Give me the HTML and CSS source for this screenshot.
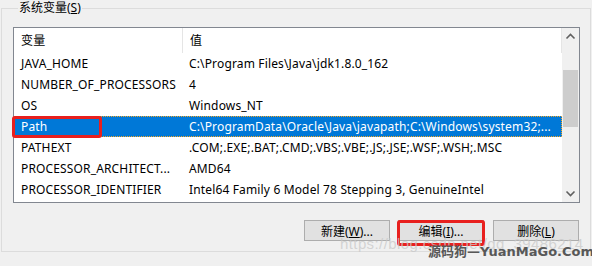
FILE: index.html
```html
<!DOCTYPE html>
<html lang="zh-CN">
<head>
    <meta charset="UTF-8">
    <title>系统变量</title>
    <link rel="stylesheet" href="styles.css">
</head>
<body>
<fieldset class="grupo">
    <legend>系统变量(<u>S</u>)</legend>

    <div class="lista">
        <div class="tabla">
            <div class="cabecera">
                <div class="col-nombre">变量</div>
                <div class="col-valor">值</div>
            </div>
            <div class="fila">
                <div class="col-nombre">JAVA_HOME</div>
                <div class="col-valor">C:\Program Files\Java\jdk1.8.0_162</div>
            </div>
            <div class="fila">
                <div class="col-nombre">NUMBER_OF_PROCESSORS</div>
                <div class="col-valor">4</div>
            </div>
            <div class="fila">
                <div class="col-nombre">OS</div>
                <div class="col-valor">Windows_NT</div>
            </div>
            <div class="fila seleccionada">
                <div class="col-nombre">Path</div>
                <div class="col-valor">C:\ProgramData\Oracle\Java\javapath;C:\Windows\system32;...</div>
                <span class="marca marca-path"></span>
            </div>
            <div class="fila">
                <div class="col-nombre">PATHEXT</div>
                <div class="col-valor">.COM;.EXE;.BAT;.CMD;.VBS;.VBE;.JS;.JSE;.WSF;.WSH;.MSC</div>
            </div>
            <div class="fila">
                <div class="col-nombre">PROCESSOR_ARCHITECT...</div>
                <div class="col-valor">AMD64</div>
            </div>
            <div class="fila">
                <div class="col-nombre">PROCESSOR_IDENTIFIER</div>
                <div class="col-valor">Intel64 Family 6 Model 78 Stepping 3, GenuineIntel</div>
            </div>
        </div>

        <!-- barra de desplazamiento -->
        <div class="scroll">
            <svg class="flecha" width="17" height="17" viewBox="0 0 17 17">
                <path d="M4.5 10.5 L8.5 6.5 L12.5 10.5" fill="none" stroke="#606060" stroke-width="1.6"/>
            </svg>
            <div class="pista">
                <div class="pulgar"></div>
            </div>
            <svg class="flecha" width="17" height="17" viewBox="0 0 17 17">
                <path d="M4.5 6.5 L8.5 10.5 L12.5 6.5" fill="none" stroke="#606060" stroke-width="1.6"/>
            </svg>
        </div>
    </div>

    <div class="botones">
        <button type="button">新建(<u>W</u>)...</button>
        <button type="button" class="marcado">编辑(<u>I</u>)...<span class="marca marca-boton"></span></button>
        <button type="button">删除(<u>L</u>)</button>
    </div>
</fieldset>

<!-- marcas de agua de la captura -->
<div class="agua-url">https://blog.csdn.net/qq_39486214</div>
<div class="agua-sitio">源码狗—YuanMaGo.Com</div>
</body>
</html>
```

FILE: styles.css
```css
body {
    margin: 0;
    padding: 0 1px;
    background-color: #f0f0f0;
    font-family: "Noto Sans", "Noto Sans CJK SC", sans-serif;
    font-size: 12px;
    color: #000;
}

.grupo {
    margin: 0;
    padding: 0 10px 0 11px;
    height: 250px;
    border: 1px solid #dcdcdc;
    min-width: 0;
}

.grupo legend {
    margin-left: 5px;
    padding: 0 1px;
    line-height: 16px;
    font-size: 12px;
}

.lista {
    display: flex;
    margin-top: 11px;
    height: 174px;
    border: 1px solid #828790;
    background-color: white;
}

.tabla {
    flex: 1;
    min-width: 0;
    letter-spacing: 0.15px;
}

.cabecera {
    display: flex;
    height: 25px;
    align-items: center;
}

.cabecera .col-nombre {
    border-right: 1px solid #e5e5e5;
    height: 25px;
    line-height: 25px;
}

.cabecera .col-valor {
    flex: 1;
    border-right: 1px solid #e5e5e5;
    height: 25px;
    line-height: 25px;
}

.fila {
    position: relative;
    display: flex;
    height: 21px;
    line-height: 21px;
    white-space: nowrap;
}

.col-nombre {
    width: 161px;
    padding-left: 7px;
}

.col-valor {
    padding-left: 7px;
    overflow: hidden;
}

.fila.seleccionada {
    background-color: #0078d7;
    color: white;
    outline: 1px dotted #f5a623;
    outline-offset: -1px;
}

.marca {
    position: absolute;
    border: 3px solid #e8201e;
    border-radius: 3px;
    pointer-events: none;
}

.marca-path {
    left: -2px;
    top: 0;
    width: 84px;
    height: 16px;
}

.scroll {
    width: 17px;
    display: flex;
    flex-direction: column;
    background-color: #f0f0f0;
}

.flecha {
    display: block;
    flex: none;
}

.pista {
    flex: 1;
    padding: 25px 1px 0 1px;
}

.pulgar {
    height: 57px;
    background-color: #cdcdcd;
}

.botones {
    display: flex;
    justify-content: flex-end;
    gap: 8px;
    margin-top: 17px;
    padding-right: 1px;
}

.botones button {
    position: relative;
    width: 86px;
    height: 21px;
    padding: 0;
    border: 1px solid #adadad;
    background-color: #e1e1e1;
    font-family: "Noto Sans", "Noto Sans CJK SC", sans-serif;
    font-size: 12px;
    color: #000;
}

.botones button.marcado {
    margin-right: 1px;
}

.marca-boton {
    left: -2px;
    top: -1px;
    right: -2px;
    bottom: -6px;
}

.agua-url {
    position: absolute;
    left: 340px;
    top: 236px;
    white-space: nowrap;
    font-family: "Liberation Sans", sans-serif;
    font-size: 15px;
    line-height: 16px;
    color: rgba(200, 200, 200, 0.75);
    letter-spacing: 0.4px;
}

.agua-sitio {
    position: absolute;
    left: 428px;
    top: 244px;
    white-space: nowrap;
    font-family: "DejaVu Sans", "Noto Sans CJK SC", sans-serif;
    font-size: 13px;
    line-height: 16px;
    font-weight: bold;
    color: #585858;
}
```
